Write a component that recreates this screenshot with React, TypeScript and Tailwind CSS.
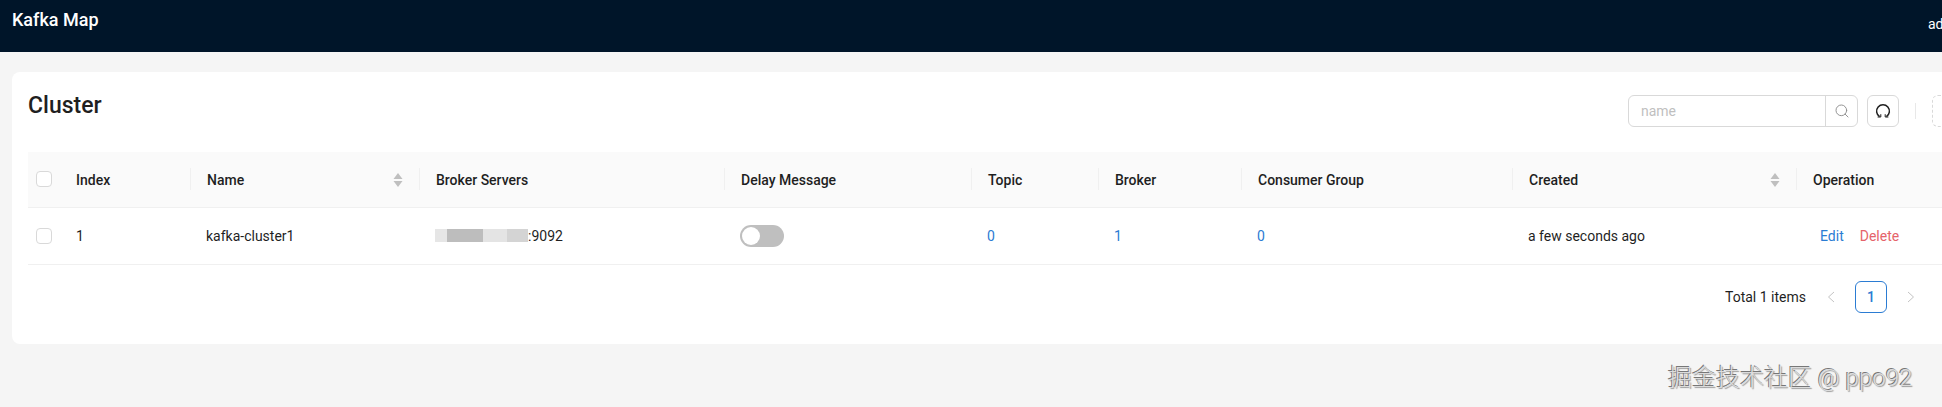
import { Search } from "lucide-react"

const uiFont = "font-['Roboto','Noto_Sans_CJK_SC',sans-serif]"

const columns = [
  { title: "Index", width: 130 },
  { title: "Name", width: 229, sortable: true },
  { title: "Broker Servers", width: 305 },
  { title: "Delay Message", width: 247 },
  { title: "Topic", width: 127 },
  { title: "Broker", width: 143 },
  { title: "Consumer Group", width: 271 },
  { title: "Created", width: 284, sortable: true },
  { title: "Operation", width: 181 },
]

function Checkbox() {
  return <span className="block size-4 rounded-[4px] border border-[#d9d9d9] bg-white" />
}

function SortIcon() {
  return (
    <svg width="10" height="16" viewBox="0 0 10 16" className="fill-[#bfbfbf]">
      <path d="M5 1 9.5 7h-9z" />
      <path d="M5 15 .5 9h9z" />
    </svg>
  )
}

function ReloadIcon() {
  return (
    <svg width="16" height="16" viewBox="0 0 16 16" fill="none" className="stroke-[#1f1f1f]">
      <path d="M4.6 13.6A6.4 6.4 0 1 1 11.4 13.6" strokeWidth="1.5" />
      <path d="M2.6 14h3.2v-2.8M13.4 14h-3.2v-2.8" strokeWidth="1" />
    </svg>
  )
}

function Chevron({ flip }: { flip?: boolean }) {
  return (
    <svg width="8" height="12" viewBox="0 0 8 12" fill="none" className={flip ? "stroke-[#c4c4c4] rotate-180" : "stroke-[#c4c4c4]"}>
      <path d="M7 1 1.5 6 7 11" strokeWidth="1" />
    </svg>
  )
}

function BlurredHost() {
  return (
    <span className="flex h-[13px] w-[93px] items-stretch">
      <span className="w-3 bg-[#e6e6e6]" />
      <span className="w-9 bg-[#bdbdbd]" />
      <span className="w-6 bg-[#e4e4e4]" />
      <span className="w-[21px] bg-[#d4d4d4]" />
    </span>
  )
}

export default function App() {
  return (
    <div className={`h-[407px] w-[1942px] overflow-hidden bg-[#f5f5f5] text-sm text-[#1f1f1f] ${uiFont} relative`}>
      <header className="flex h-[52px] items-start justify-between bg-[#001529] pl-3 text-white">
        <div className="mt-1.5 text-lg font-medium">Kafka Map</div>
        <div className="mt-3.5 w-[14px] overflow-hidden whitespace-nowrap text-sm">ad</div>
      </header>

      <main className="ml-3 mt-5 h-[272px] w-[1981px] rounded-lg bg-white px-4 pt-[18px]">
        <div className="flex h-[36px] items-center justify-between">
          <h1 className="-mt-1 text-[23px] font-medium">Cluster</h1>
          <div className="mt-1.5 flex items-center pr-[13px]">
            <div className="flex h-8 w-[230px] rounded-md border border-[#d9d9d9]">
              <span className="flex-1 px-3 leading-[30px] text-[#bfbfbf]">name</span>
              <span className="flex w-8 items-center justify-center border-l border-[#d9d9d9] text-[#8c8c8c]">
                <Search size={16} strokeWidth={1.4} />
              </span>
            </div>
            <button className="ml-[9px] flex size-8 items-center justify-center rounded-md border border-[#d9d9d9]">
              <ReloadIcon />
            </button>
            <span className="ml-4 h-4 border-l border-[#e8e8e8]" />
            <span className="ml-4 size-8 rounded-md border border-dashed border-[#d9d9d9]" />
          </div>
        </div>

        <table className="mt-[26px] w-[1949px] table-fixed border-collapse">
          <colgroup>
            <col className="w-8" />
            {columns.map((column) => (
              <col key={column.title} style={{ width: column.width }} />
            ))}
          </colgroup>
          <thead>
            <tr className="h-[55px] border-b border-[#f0f0f0] bg-[#fafafa] text-left">
              <th className="pl-2 font-medium">
                <Checkbox />
              </th>
              {columns.map((column, index) => (
                <th key={column.title} className="font-medium">
                  <div className={`flex h-[22px] items-center justify-between pl-4 pr-4 pt-0.5 ${index === 0 ? "" : "border-l border-[#f0f0f0]"}`}>
                    <span>{column.title}</span>
                    {column.sortable ? <SortIcon /> : null}
                  </div>
                </th>
              ))}
            </tr>
          </thead>
          <tbody>
            <tr className="h-[57px] border-b border-[#f0f0f0]">
              <td className="pl-2">
                <Checkbox />
              </td>
              <td className="pl-4">1</td>
              <td className="pl-4">kafka-cluster1</td>
              <td className="pl-4">
                <span className="flex items-center">
                  <BlurredHost />
                  :9092
                </span>
              </td>
              <td className="pl-4">
                <span className="flex h-[22px] w-11 items-center rounded-full bg-[#bfbfbf] pl-0.5">
                  <span className="size-[18px] rounded-full bg-white" />
                </span>
              </td>
              <td className="pl-4 text-[#2b7cd3]">0</td>
              <td className="pl-4 text-[#2b7cd3]">1</td>
              <td className="pl-4 text-[#2b7cd3]">0</td>
              <td className="pl-4">a few seconds ago</td>
              <td className="pl-[24px]">
                <span className="text-[#2b7cd3]">Edit</span>
                <span className="ml-4 text-[#e5636a]">Delete</span>
              </td>
            </tr>
          </tbody>
        </table>

        <div className="mt-4 flex w-[1899px] items-center justify-end">
          <span>Total 1 items</span>
          <span className="ml-[9px] flex w-8 justify-center"><Chevron /></span>
          <span className="ml-2 flex size-8 items-center justify-center rounded-md border border-[#2b7cd3] font-medium text-[#2b7cd3]">1</span>
          <span className="ml-2 flex w-8 justify-center"><Chevron flip /></span>
        </div>
      </main>

      <div className="absolute left-[1668px] top-[362px] whitespace-nowrap text-2xl font-light text-[#dcdcdc] [text-shadow:-1px_-1px_0_#777,1px_1px_1px_#999]">
        掘金技术社区 @ ppo92
      </div>
    </div>
  )
}
